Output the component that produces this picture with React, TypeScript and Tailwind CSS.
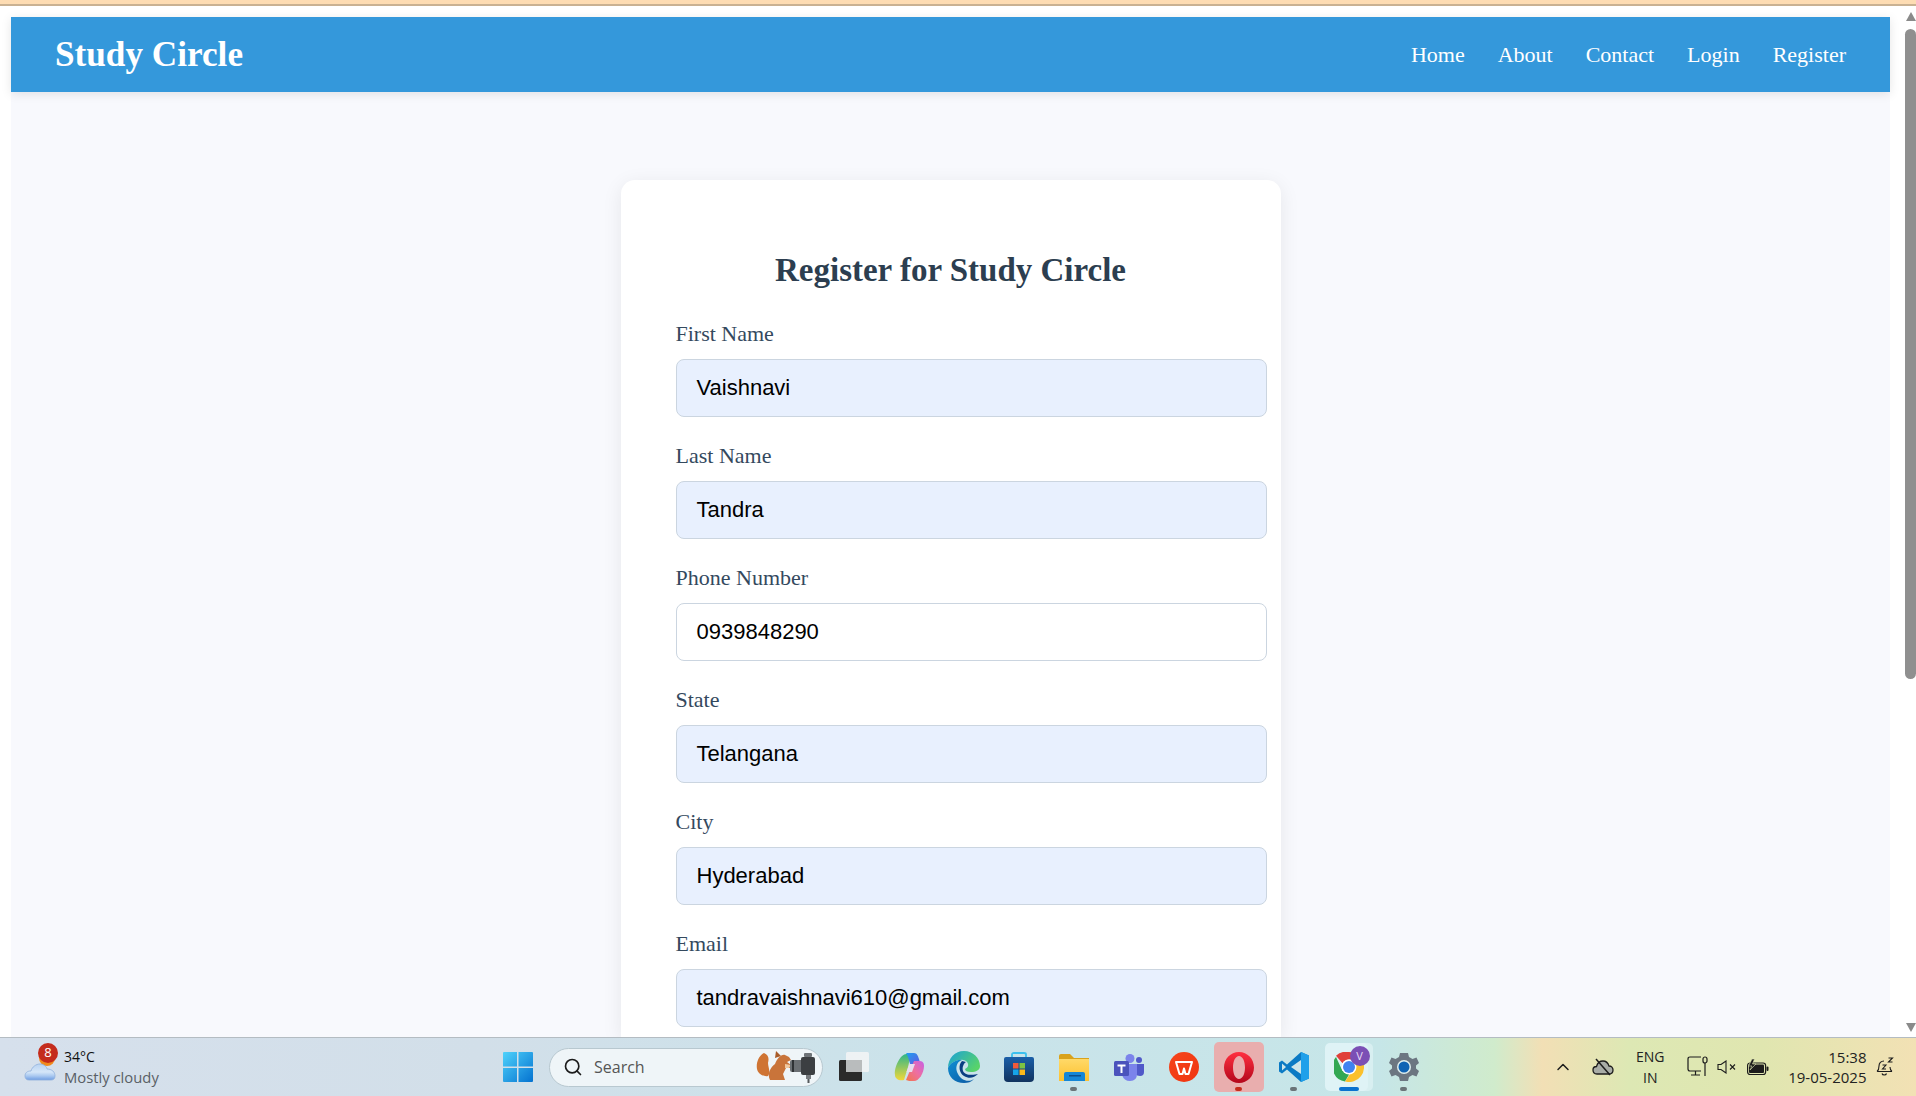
import React from "react";
import { ChevronUp, Search } from "lucide-react";

const navLinks = ["Home", "About", "Contact", "Login", "Register"];

const fields = [
  { label: "First Name", value: "Vaishnavi", filled: true },
  { label: "Last Name", value: "Tandra", filled: true },
  { label: "Phone Number", value: "0939848290", filled: false },
  { label: "State", value: "Telangana", filled: true },
  { label: "City", value: "Hyderabad", filled: true },
  { label: "Email", value: "tandravaishnavi610@gmail.com", filled: true },
];

const WeatherIcon = () => (
  <svg width="32" height="36" viewBox="0 0 32 36">
    <defs>
      <linearGradient id="cloud" x1="0" y1="0" x2="0" y2="1">
        <stop offset="0" stopColor="#b9d3f2" />
        <stop offset="0.500" stopColor="#d5e6f8" />
        <stop offset="0.750" stopColor="#a9c8f0" />
        <stop offset="1" stopColor="#6f9de2" />
      </linearGradient>
    </defs>
    <circle cx="23" cy="9" r="8" fill="#f08a1d" />
    <path
      d="M5 31 C2 31 1 29 1 27 C1 24 3 22 7 22 C8 18 12 15 16 15 C20 15 23 18 23 20 C28 20 31 23 31 27 C31 30 29 31 27 31 Z"
      fill="url(#cloud)"
      stroke="#8fb0dc"
      strokeWidth="0.800"
    />
  </svg>
);

const WindowsLogo = () => (
  <svg width="30" height="30" viewBox="0 0 30 30">
    <defs>
      <linearGradient id="win" x1="0" y1="0" x2="1" y2="1">
        <stop offset="0" stopColor="#4fd2fb" />
        <stop offset="1" stopColor="#0472d0" />
      </linearGradient>
    </defs>
    <path
      d="M1 0h13v14.500H0V1a1 1 0 0 1 1-1zM15.500 0H29a1 1 0 0 1 1 1v13.500H15.500zM0 16h14v14H1a1 1 0 0 1-1-1zM15.500 16H30v13a1 1 0 0 1-1 1H15.500z"
      fill="url(#win)"
    />
  </svg>
);

const SquirrelCamera = () => (
  <svg width="62" height="34" viewBox="0 0 62 34">
    <path d="M8 3 C2 6 0 14 1 19 C2 24 8 27 12 26 C15 22 12 17 12 13 C13 9 13 5 8 3 Z" fill="#cf7433" />
    <path d="M14 30 C11 24 14 18 19 14 C21 9 25 4 29 5 L33 7 L35 10 L31 12 L35 15 L34 18 L30 18 L27 24 L29 30 Z" fill="#c9743a" />
    <path d="M19 8 L20 1 L25 6 Z" fill="#a85b28" />
    <path d="M29 14 L35 15 L33 18 L29 18 Z" fill="#f0c9a0" />
    <rect x="34" y="10" width="13" height="12" rx="2" fill="#6b6f73" />
    <rect x="36" y="10" width="2" height="12" fill="#2f3235" />
    <rect x="45" y="7" width="14" height="18" rx="2" fill="#3c3f42" />
    <rect x="48" y="3" width="8" height="4" rx="1" fill="#6f7478" />
    <rect x="50" y="25" width="5" height="4" fill="#777b7f" />
    <rect x="51.500" y="29" width="2" height="4" fill="#55585b" />
  </svg>
);

const TaskView = () => (
  <svg width="30" height="30" viewBox="0 0 30 30">
    <rect x="0" y="8" width="23" height="21" rx="1.500" fill="#2a2a2a" />
    <rect x="7" y="0" width="23" height="20" rx="1.500" fill="#f2f4f5" fillOpacity="0.9" />
    <rect x="7" y="8" width="16" height="12" fill="#b9bcbd" />
  </svg>
);

const Copilot = () => (
  <svg width="30" height="28" viewBox="0 0 30 28">
    <defs>
      <linearGradient id="cp1" x1="0" y1="0" x2="1" y2="1">
        <stop offset="0" stopColor="#1f9ff0" />
        <stop offset="1" stopColor="#6a4fe0" />
      </linearGradient>
      <linearGradient id="cp2" x1="0" y1="1" x2="1" y2="0">
        <stop offset="0" stopColor="#f2754a" />
        <stop offset="0.500" stopColor="#ee6f9f" />
        <stop offset="1" stopColor="#c860e6" />
      </linearGradient>
      <linearGradient id="cp3" x1="0" y1="0" x2="0" y2="1">
        <stop offset="0" stopColor="#2cb58a" />
        <stop offset="1" stopColor="#f0d83a" />
      </linearGradient>
    </defs>
    <path d="M7 4 C9 1 14 0 17 1 L14 14 L10 27 C5 28 1 26 1 22 C0 17 3 9 7 4 Z" fill="url(#cp3)" />
    <path d="M12 0 H20 C23 0 24 3 25 6 L27 14 L17 14 L14 4 C13 2 13 1 12 0 Z" fill="url(#cp1)" />
    <path d="M20 28 C25 28 30 20 30 13 C30 9 28 8 25 8 L20 8 L12 27 C14 28 16 28 20 28 Z" fill="url(#cp2)" />
    <path d="M15.500 11 H21 L18 19 H12.500 Z" fill="#e8dcef" />
  </svg>
);

const Edge = () => (
  <svg width="32" height="32" viewBox="0 0 32 32">
    <defs>
      <linearGradient id="ed1" x1="0" y1="0" x2="1" y2="0.600">
        <stop offset="0" stopColor="#1ba1d8" />
        <stop offset="1" stopColor="#58d36a" />
      </linearGradient>
      <linearGradient id="ed2" x1="0" y1="0" x2="0.800" y2="1">
        <stop offset="0" stopColor="#0f8fd3" />
        <stop offset="1" stopColor="#0c5fa8" />
      </linearGradient>
    </defs>
    <path d="M16 0 C25 0 32 7 32 15 C32 19 28 21 23 21 C19 21 17 20 17 18 C22 16 21 10 15 9 C9 8 2 12 0 17 C0 7 7 0 16 0 Z" fill="url(#ed1)" />
    <path d="M0 17 C2 12 9 8 14 9 C8 11 7 18 10 23 C13 29 20 32 26 28 C23 31 20 32 16 32 C7 32 0 26 0 17 Z" fill="url(#ed2)" />
    <path d="M14 10 C10 14 11 22 16 25 C21 28 26 27 30 23 C26 24 17 25 15 20 C14 17 15 13 18 11 Z" fill="#0a3f82" />
  </svg>
);

const StoreIcon = () => (
  <svg width="30" height="30" viewBox="0 0 30 30">
    <defs>
      <linearGradient id="st" x1="0" y1="0" x2="0" y2="1">
        <stop offset="0" stopColor="#1b5fa8" />
        <stop offset="1" stopColor="#11335f" />
      </linearGradient>
    </defs>
    <path d="M8 6 V2.500 Q8 1 10 1 H20 Q22 1 22 2.500 V6" fill="none" stroke="#3cc0ee" strokeWidth="1.800" />
    <path d="M0 7 Q0 5 2 5 H28 Q30 5 30 7 V26 Q30 30 26 30 H4 Q0 30 0 26 Z" fill="url(#st)" />
    <rect x="9" y="11" width="5.500" height="5.500" fill="#f05a3a" />
    <rect x="15.500" y="11" width="5.500" height="5.500" fill="#7cc243" />
    <rect x="9" y="17.500" width="5.500" height="5.500" fill="#16a4e8" />
    <rect x="15.500" y="17.500" width="5.500" height="5.500" fill="#fbb81a" />
  </svg>
);

const FolderIcon = () => (
  <svg width="30" height="27" viewBox="0 0 30 27">
    <defs>
      <linearGradient id="fo" x1="0" y1="0" x2="0" y2="1">
        <stop offset="0" stopColor="#ffd968" />
        <stop offset="1" stopColor="#fdc12f" />
      </linearGradient>
    </defs>
    <path d="M0 2 Q0 0 2 0 H11 L15 4 H30 V8 H0 Z" fill="#d9a21c" />
    <rect x="0" y="5" width="30" height="22" fill="url(#fo)" />
    <path d="M5 27 V20 Q5 18 7 18 H24 Q26 18 26 20 V27 Z" fill="#1586d6" />
    <rect x="10" y="21" width="12" height="1.500" fill="#0d4f8c" />
  </svg>
);

const TeamsIcon = () => (
  <svg width="30" height="27" viewBox="0 0 30 27">
    <circle cx="16" cy="4.500" r="4.500" fill="#7b83eb" />
    <circle cx="25" cy="6" r="3" fill="#5059c9" />
    <path d="M21 10 H30 V18 Q30 22 26 22 Q23 22 21 20 Z" fill="#5059c9" />
    <path d="M8 10 H23 V20 Q23 27 16 27 Q10 27 8 21 Z" fill="#7b83eb" />
    <rect x="0" y="7" width="15" height="15" rx="1.500" fill="#4b53bc" />
    <path d="M3.500 10.500 H11.500 V12.500 H8.500 V19 H6.500 V12.500 H3.500 Z" fill="#fff" />
  </svg>
);

const WpsIcon = () => (
  <svg width="30" height="30" viewBox="0 0 30 30">
    <defs>
      <linearGradient id="wp" x1="0" y1="0" x2="1" y2="1">
        <stop offset="0" stopColor="#f5451c" />
        <stop offset="1" stopColor="#f0350f" />
      </linearGradient>
    </defs>
    <circle cx="15" cy="15" r="15" fill="url(#wp)" />
    <path
      d="M7 10 H23 L19.500 22 H16.500 L15 16.500 L13.500 22 H10.500 Z"
      fill="none"
      stroke="#fff"
      strokeWidth="2"
      strokeLinejoin="round"
    />
  </svg>
);

const OperaIcon = () => (
  <svg width="30" height="31" viewBox="0 0 30 31">
    <defs>
      <linearGradient id="op" x1="0" y1="0" x2="0" y2="1">
        <stop offset="0" stopColor="#ff3040" />
        <stop offset="1" stopColor="#b3061b" />
      </linearGradient>
    </defs>
    <path
      fillRule="evenodd"
      d="M15 0 C23.500 0 30 7 30 15.500 C30 24 23.500 31 15 31 C6.500 31 0 24 0 15.500 C0 7 6.500 0 15 0 Z M15 4 C11.500 4 9 9 9 15.500 C9 22 11.500 27 15 27 C18.500 27 21 22 21 15.500 C21 9 18.500 4 15 4 Z"
      fill="url(#op)"
    />
  </svg>
);

const VsCodeIcon = () => (
  <svg width="30" height="30" viewBox="0 0 30 30">
    <path d="M22 0 L30 3.500 V26.500 L22 30 L8 17.500 L3 21.500 L0 19.500 V10.500 L3 8.500 L8 12.500 Z" fill="#0b7ac4" />
    <path d="M22 0 L30 3.500 V26.500 L22 30 Z" fill="#1fa0ea" />
    <path d="M22 8 V22 L12 15 Z" fill="#cfe6ea" />
    <path d="M3 11.500 V18.500 L7 15 Z" fill="#cfe6ea" />
  </svg>
);

const ChromeIcon = () => (
  <svg width="30" height="30" viewBox="0 0 30 30">
    <path d="M15 0 A15 15 0 0 1 28 7.500 L15 7.500 A7.500 7.500 0 0 0 8.500 11.250 L2 3.750 A15 15 0 0 1 15 0 Z" fill="#e0413a" />
    <path d="M2 5 A15 15 0 0 0 11 29.500 L17 19 L8.500 19 L2 5 Z" fill="#33a853" />
    <path d="M28 7.500 A15 15 0 0 1 11 29.500 L18 19 A7.500 7.500 0 0 0 21.500 11 Z" fill="#fbc02d" />
    <circle cx="15" cy="15" r="7.500" fill="#fff" />
    <circle cx="15" cy="15" r="6" fill="#3f83f0" />
  </svg>
);

const GearIcon = () => (
  <svg width="30" height="30" viewBox="0 0 30 30">
    <path
      d="M11 1 H19 L20 5 L23.500 7 L27.500 5.500 L30 11 L27 13.500 V16.500 L30 19 L27.500 24.500 L23.500 23 L20 25 L19 29 H11 L10 25 L6.500 23 L2.500 24.500 L0 19 L3 16.500 V13.500 L0 11 L2.500 5.500 L6.500 7 L10 5 Z"
      fill="#6c7681"
    />
    <circle cx="15" cy="15" r="7" fill="#dfeeee" />
    <circle cx="15" cy="15" r="5.500" fill="#0f63b4" />
  </svg>
);

const CloudOff = () => (
  <svg width="22" height="18" viewBox="0 0 22 18" fill="none" stroke="#1c1c1c" strokeWidth="1.300">
    <path d="M5 16 C2 16 1 14 1 12 C1 10 2.500 8.500 4.500 8.500 C5.500 5 8 3 11 3 C14 3 16 5 17 8 C19.500 8 21 10 21 12 C21 14.500 19.500 16 17 16 Z" fill="#a8aca6" />
    <path d="M4 1 L18 17" strokeWidth="1.500" />
  </svg>
);

const NetworkIcon = () => (
  <svg width="22" height="22" viewBox="0 0 22 22" fill="none" stroke="#1c1c1c" strokeWidth="1.200">
    <path d="M14 15 H3 Q1 15 1 13 V3 Q1 1 3 1 H14" />
    <path d="M4 19 H13 M8.500 15 V19" />
    <rect x="16" y="1" width="4" height="6" rx="2" />
    <path d="M18 7 V20" />
  </svg>
);

const MuteIcon = () => (
  <svg width="20" height="14" viewBox="0 0 20 14" fill="none" stroke="#1c1c1c" strokeWidth="1.100">
    <path d="M1 4.500 H4 L9 1 V13 L4 9.500 H1 Z" />
    <path d="M13 4.500 L18 9.500 M18 4.500 L13 9.500" />
  </svg>
);

const BatteryIcon = () => (
  <svg width="22" height="17" viewBox="0 0 22 17">
    <rect x="0.600" y="4" width="18" height="11.500" rx="2.500" fill="none" stroke="#1c1c1c" strokeWidth="1.200" />
    <rect x="2" y="5.500" width="15" height="8.500" rx="1" fill="#1c1c1c" />
    <rect x="19.500" y="7.500" width="2" height="4.500" rx="1" fill="#1c1c1c" />
    <path d="M5 0 L1.500 7 H5 L3 11 L9 5 H5.500 L7.500 0 Z" fill="#1c1c1c" stroke="#dfe7b4" strokeWidth="0.600" />
  </svg>
);

const BellZz = () => (
  <svg width="18" height="20" viewBox="0 0 18 20" fill="none" stroke="#1c1c1c" strokeWidth="1.100">
    <path d="M1 14.500 C3 13 3 11 3 9 C3 6 5 4 8 4 M14 10 C14 12 14.500 13.500 16 14.500 M1 14.500 H16" />
    <path d="M6 16.500 C6.500 18.500 10 18.500 10.500 16.500" />
    <path d="M6.500 8 H10 L6.500 12 H10" />
    <path d="M12.500 1 H16.500 L12.500 5 H16.500" />
  </svg>
);

const TaskbarIcon = ({
  children,
  tone,
  dot,
}: {
  children: React.ReactNode;
  tone?: "opera" | "chrome";
  dot?: "gray" | "red" | "blue";
}) => (
  <div className="relative flex h-[58px] w-[55px] items-center justify-center">
    {tone === "opera" && (
      <div className="absolute left-[3px] top-[4px] h-[50px] w-[50px] rounded-[5px] bg-[#e9aeae]" />
    )}
    {tone === "chrome" && (
      <>
        <div className="absolute left-[8px] top-[5px] h-[48px] w-[44px] rounded-[5px] bg-[#e4f5f7]/60" />
        <div className="absolute left-[4px] top-[5px] h-[48px] w-[43px] rounded-[5px] bg-[#dff3f6]" />
      </>
    )}
    <div className="relative">{children}</div>
    {dot === "gray" && (
      <div className="absolute bottom-[5px] left-[24px] h-[4px] w-[7px] rounded-full bg-[#6b7478]" />
    )}
    {dot === "red" && (
      <div className="absolute bottom-[5px] left-[24px] h-[4px] w-[7px] rounded-full bg-[#c42b1c]" />
    )}
    {dot === "blue" && (
      <div className="absolute bottom-[5px] left-[18px] h-[4px] w-[20px] rounded-full bg-[#0a72cf]" />
    )}
  </div>
);

export default function App() {
  return (
    <div className="flex h-[1096px] w-full flex-col overflow-hidden bg-white">
      <div className="h-[6px] shrink-0 border-b-2 border-[#c9b192] bg-[#fddcb3]" />

      <div className="flex min-h-0 flex-1">
        <div className="w-[11px] shrink-0" />

        <div className="flex w-[1879px] shrink-0 flex-col pt-[11px]">
          <header className="relative z-10 flex h-[75px] shrink-0 items-center justify-between bg-[#3498db] px-[44px] shadow-[0_2px_10px_rgba(0,0,0,0.1)]">
            <span className="pt-[2px] font-['Liberation_Serif',serif] text-[35.200px] font-bold text-white">Study Circle</span>
            <nav className="flex gap-[33px] font-['Liberation_Serif',serif] text-[22px] text-white">
              {navLinks.map((link) => (
                <a key={link} href="#">
                  {link}
                </a>
              ))}
            </nav>
          </header>

          <main className="flex min-h-0 flex-1 justify-center overflow-hidden bg-[#f8f9fd] pt-[88px]">
            <div className="w-[660px] shrink-0 rounded-t-[14px] bg-white pt-[68px] shadow-[0_4px_20px_rgba(0,0,0,0.08)]">
              <h2 className="text-center font-['Liberation_Serif',serif] text-[33px] font-bold leading-[44px] text-[#2c3e50]">
                Register for Study Circle
              </h2>
              <form className="ml-[55px] mt-[26px] flex w-[591px] flex-col gap-[23px]">
                {fields.map((field) => (
                  <div key={field.label} className="flex flex-col">
                    <label className="h-[32px] font-['Liberation_Serif',serif] text-[22px] leading-[32px] text-[#34495e]">
                      {field.label}
                    </label>
                    <div
                      className={`mt-[9px] flex h-[58px] items-center rounded-[8px] border border-[#cbd5e0] pb-[2px] pl-[20px] font-['Liberation_Sans',sans-serif] text-[22px] text-black ${
                        field.filled ? "bg-[#e8f0fe]" : "bg-white"
                      }`}
                    >
                      {field.value}
                    </div>
                  </div>
                ))}
              </form>
            </div>
          </main>
        </div>

        <div className="flex w-[26px] shrink-0 flex-col items-end pt-[6px]">
          <div className="h-0 w-0 border-x-[5.500px] border-b-[9px] border-x-transparent border-b-[#8a8a8a]" />
          <div className="mt-[8px] h-[650px] w-[11px] rounded-full bg-[#8f8f8f]" />
          <div className="mt-auto mb-[5px] h-0 w-0 border-x-[5.500px] border-t-[9px] border-x-transparent border-t-[#8a8a8a]" />
        </div>
      </div>

      <footer className="flex h-[59px] shrink-0 items-center border-t border-[#b4bcc2] bg-[linear-gradient(90deg,#d6e0ec_0%,#d2dfe9_25%,#cae3ea_50%,#c6e6e8_72%,#d0ebcc_78%,#f2dfb5_80.500%,#dde8b4_85%,#e0e6b0_92%,#f2e1b4_100%)] font-['Open_Sans',sans-serif]">
        <div className="relative flex w-[503px] shrink-0 items-center pl-[24px]">
          <WeatherIcon />
          <div className="absolute left-[38px] top-[-4px] flex h-[20px] w-[20px] items-center justify-center rounded-full bg-[#c42b1c] text-[13px] text-white">
            8
          </div>
          <div className="ml-[8px] flex flex-col text-[14.800px] leading-[20px]">
            <span className="text-[14px] text-[#111]">34°C</span>
            <span className="text-[#5a5f66]">Mostly cloudy</span>
          </div>
        </div>

        <WindowsLogo />

        <div className="ml-[16px] flex h-[39px] w-[274px] shrink-0 items-center rounded-full border border-[#b8c8d0] bg-[#eff5f8] pl-[13px] pr-[4px]">
          <Search size={20} color="#1c1c1c" strokeWidth={2} />
          <span className="ml-[11px] text-[16px] text-[#555]">Search</span>
          <div className="ml-auto">
            <SquirrelCamera />
          </div>
        </div>

        <div className="ml-[3px] flex">
          <TaskbarIcon>
            <TaskView />
          </TaskbarIcon>
          <TaskbarIcon>
            <Copilot />
          </TaskbarIcon>
          <TaskbarIcon>
            <Edge />
          </TaskbarIcon>
          <TaskbarIcon>
            <StoreIcon />
          </TaskbarIcon>
          <TaskbarIcon dot="gray">
            <FolderIcon />
          </TaskbarIcon>
          <TaskbarIcon>
            <TeamsIcon />
          </TaskbarIcon>
          <TaskbarIcon>
            <WpsIcon />
          </TaskbarIcon>
          <TaskbarIcon tone="opera" dot="red">
            <OperaIcon />
          </TaskbarIcon>
          <TaskbarIcon dot="gray">
            <VsCodeIcon />
          </TaskbarIcon>
          <TaskbarIcon tone="chrome" dot="blue">
            <ChromeIcon />
            <div className="absolute left-[16px] top-[-6px] flex h-[20px] w-[20px] items-center justify-center rounded-full bg-[#7b4fb5] text-[11px] text-[#e8dcf5]">
              V
            </div>
          </TaskbarIcon>
          <TaskbarIcon dot="gray">
            <GearIcon />
          </TaskbarIcon>
        </div>

        <div className="ml-[122px] flex items-center">
          <ChevronUp size={20} color="#1c1c1c" strokeWidth={1.8} />
          <div className="ml-[19px]">
            <CloudOff />
          </div>
          <div className="ml-[22px] flex flex-col items-center text-[14px] leading-[21px] text-[#222]">
            <span>ENG</span>
            <span>IN</span>
          </div>
          <div className="ml-[22px]">
            <NetworkIcon />
          </div>
          <div className="ml-[8px]">
            <MuteIcon />
          </div>
          <div className="ml-[10px]">
            <BatteryIcon />
          </div>
          <div className="ml-[18px] flex w-[80px] flex-col items-end whitespace-nowrap text-[15px] leading-[20px] text-[#222]">
            <span>15:38</span>
            <span>19-05-2025</span>
          </div>
          <div className="ml-[9px]">
            <BellZz />
          </div>
        </div>
      </footer>
    </div>
  );
}
